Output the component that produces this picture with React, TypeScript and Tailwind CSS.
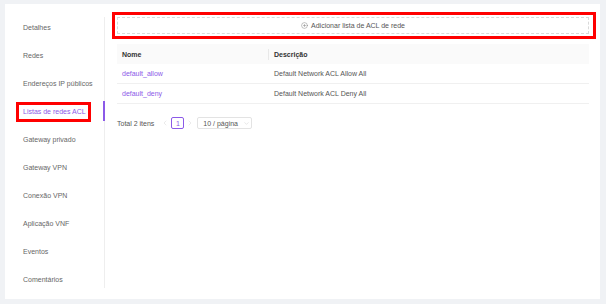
import { CirclePlus, ChevronDown, ChevronLeft, ChevronRight } from "lucide-react";

const menu = [
  "Detalhes",
  "Redes",
  "Endereços IP públicos",
  "Listas de redes ACL",
  "Gateway privado",
  "Gateway VPN",
  "Conexão VPN",
  "Aplicação VNF",
  "Eventos",
  "Comentários",
];

const rows = [
  { name: "default_allow", desc: "Default Network ACL Allow All" },
  { name: "default_deny", desc: "Default Network ACL Deny All" },
];

export default function App() {
  return (
    <div className="min-h-screen bg-[#f0f2f5] pl-[5px] pt-[4px] font-['Liberation_Sans',Arial,sans-serif] text-[7px] leading-[9px]">
      <div className="flex h-[295px] w-[595px] bg-white pt-[13px]">
        {/* menu lateral */}
        <div className="flex h-[271px] w-[100px] shrink-0 flex-col gap-[8px] border-r border-[#eeeeee]">
          {menu.map((m, i) => {
            const active = i === 3;
            return (
              <div key={m} className="relative flex h-[20px] shrink-0 items-center pl-[18px]">
                <span className={active ? "text-[#8c5ae8]" : "text-[#666666]"}>{m}</span>
                {active && (
                  <>
                    <span className="absolute -right-[1px] top-0 h-[20px] w-[2px] bg-[#8c5ae8]" />
                    <span className="absolute left-[11px] top-[1px] h-[20px] w-[75px] border-[3px] border-[#ff0000]" />
                  </>
                )}
              </div>
            );
          })}
        </div>

        {/* conteúdo */}
        <div className="flex-1 pl-[12px] pr-[11px] pt-0">
          <div className="relative">
            <button className="flex h-[17px] w-full items-center justify-center gap-[3px] border border-dashed border-[#d9d9d9] text-[#555555]">
              <CirclePlus size={7} strokeWidth={1.5} className="text-[#777777]" />
              <span>Adicionar lista de ACL de rede</span>
            </button>
            <span className="pointer-events-none absolute -bottom-[5px] -left-[5px] -right-[7px] -top-[5px] border-[3px] border-[#ff0000]" />
          </div>

          <div className="mt-[10px]">
            <div className="flex h-[20px] items-center bg-[#fafafa] font-bold text-[#333333]">
              <div className="relative w-[152px] pl-[5px]">
                Nome
                <span className="absolute right-0 top-[-1px] h-[11px] w-px bg-[#e8e8e8]" />
              </div>
              <div className="pl-[5px]">Descrição</div>
            </div>
            {rows.map((r) => (
              <div key={r.name} className="flex h-[20px] items-center border-b border-[#f0f0f0]">
                <div className="w-[152px] pl-[5px] text-[#8c5ae8]">{r.name}</div>
                <div className="pl-[5px] text-[#555555]">{r.desc}</div>
              </div>
            ))}
          </div>

          <div className="mt-[13px] flex h-[12px] items-center text-[#555555]">
            <span>Total 2 itens</span>
            <ChevronLeft size={8} strokeWidth={1.2} className="ml-[7px] text-[#cccccc]" />
            <span className="ml-[2px] flex h-[12px] w-[13px] items-center justify-center rounded-[2px] border border-[#8c5ae8] text-[#8c5ae8]">
              1
            </span>
            <ChevronRight size={8} strokeWidth={1.2} className="ml-[2px] text-[#cccccc]" />
            <span className="ml-[3px] flex h-[12px] w-[55px] items-center rounded-[2px] border border-[#e3e3e3] pl-[5px]">
              10 / página
              <ChevronDown size={7} strokeWidth={1.2} className="ml-[5px] text-[#bbbbbb]" />
            </span>
          </div>
        </div>
      </div>
    </div>
  );
}
